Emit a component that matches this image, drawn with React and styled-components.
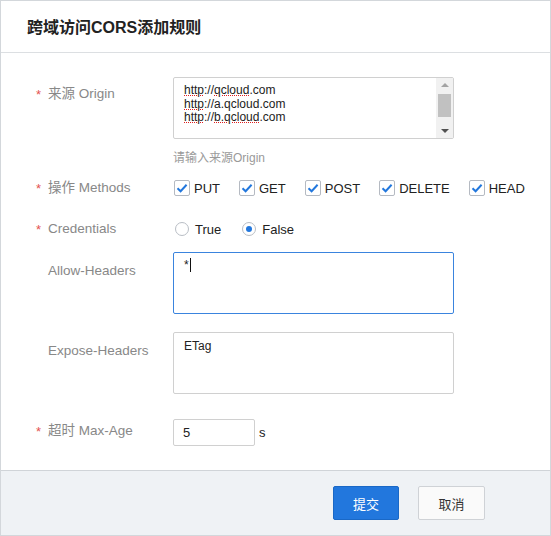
import React from "react";
import styled, { createGlobalStyle } from "styled-components";

const Global = createGlobalStyle`
  html, body { margin: 0; padding: 0; background: #fff; }
  body { font-family: "Liberation Sans", "Noto Sans CJK SC", sans-serif; }
  * { box-sizing: border-box; }
`;

const Dialog = styled.div`
  width: 551px;
  height: 536px;
  border: 1px solid #d3d7db;
  display: flex;
  flex-direction: column;
  background: #fff;
  color: #333;
`;

const Header = styled.div`
  height: 52px;
  flex: none;
  border-bottom: 1px solid #dcdfe2;
  display: flex;
  align-items: center;
  padding: 0 0 0 26px;
`;

const Title = styled.h1`
  margin: 0;
  font-size: 16px;
  font-weight: bold;
  color: #222;
  padding-bottom: 1px;
  font-family: "Liberation Sans", "Noto Sans CJK SC", sans-serif;
`;

const Body = styled.div`
  flex: 1;
  padding: 24px 0 0 0;
`;

const Row = styled.div`
  display: flex;
  align-items: ${(p) => p.$align || "flex-start"};
  margin-bottom: ${(p) => p.$mb || 0}px;
`;

const Label = styled.div`
  width: 172px;
  flex: none;
  padding-left: 47px;
  padding-top: ${(p) => p.$pt || 0}px;
  font-size: 13.5px;
  color: #888;
  position: relative;
  line-height: 16px;
`;

const Star = styled.span`
  position: absolute;
  left: 35px;
  top: ${(p) => (p.$pt || 0) + 1}px;
  color: #e45252;
  font-size: 13px;
`;

const Control = styled.div`
  display: flex;
  flex-direction: column;
`;

const Box = styled.div`
  position: relative;
  width: 281px;
  height: 62px;
  border: 1px solid ${(p) => (p.$focus ? "#3a84de" : "#d0d0d0")};
  border-radius: 2px;
  padding: ${(p) => p.$pt || 6}px 10px 0 10px;
  font-size: 12px;
  line-height: 13.5px;
  color: #222;
  background: #fff;
  overflow: hidden;
`;

const Line = styled.div`
  white-space: nowrap;
`;

const Spell = styled.span`
  text-decoration: underline dotted #e02020;
  text-decoration-thickness: 1px;
  text-underline-offset: 1px;
`;

const ScrollTrack = styled.div`
  position: absolute;
  top: 0;
  right: 0;
  bottom: 0;
  width: 17px;
  background: #f1f1f1;
  display: flex;
  flex-direction: column;
  align-items: center;
  justify-content: space-between;
  padding: 5px 0 5px;
`;

const Arrow = styled.div`
  width: 0;
  height: 0;
  border-left: 4px solid transparent;
  border-right: 4px solid transparent;
  ${(p) =>
    p.$down
      ? "border-top: 4px solid #505050;"
      : "border-bottom: 4px solid #a3a3a3;"}
`;

const Thumb = styled.div`
  position: absolute;
  left: 2px;
  right: 2px;
  top: 16px;
  height: 23px;
  background: #c1c1c1;
`;

const Hint = styled.div`
  margin-top: 11px;
  font-size: 12px;
  color: #9a9a9a;
  line-height: 16px;
`;

const Options = styled.div`
  display: flex;
  align-items: center;
  gap: ${(p) => p.$gap || 20}px;
  padding-left: 1px;
  height: 20px;
`;

const Option = styled.label`
  display: flex;
  align-items: center;
  gap: ${(p) => p.$gap || 4}px;
  font-size: 13px;
  color: #222;
`;

const CheckBox = styled.span`
  width: 16px;
  height: 16px;
  border: 1px solid #b5bac2;
  border-radius: 2px;
  background: #fff;
  display: flex;
  align-items: center;
  justify-content: center;
`;

const Radio = styled.span`
  width: 14px;
  height: 14px;
  border-radius: 50%;
  border: 1px solid #b9bec5;
  background: #fff;
  display: flex;
  align-items: center;
  justify-content: center;
  margin-left: 1px;
  &::after {
    content: "";
    width: 6px;
    height: 6px;
    border-radius: 50%;
    background: ${(p) => (p.$on ? "#2277dd" : "transparent")};
  }
`;

const Caret = styled.span`
  display: inline-block;
  width: 1px;
  height: 14px;
  background: #111;
  vertical-align: -3px;
  margin-left: 1px;
`;

const SmallInput = styled.div`
  width: 82px;
  height: 27px;
  border: 1px solid #d0d0d0;
  border-radius: 2px;
  padding: 0 9px;
  display: flex;
  align-items: center;
  font-size: 13px;
  color: #222;
`;

const Unit = styled.span`
  font-size: 13px;
  color: #222;
  margin-left: 4px;
  padding-top: 6px;
`;

const Footer = styled.div`
  flex: none;
  height: 65px;
  border-top: 1px solid #d0d4d8;
  background: #eff2f5;
  display: flex;
  justify-content: flex-end;
  align-items: flex-start;
  gap: 19px;
  padding: 15px 65px 0 0;
`;

const Button = styled.button`
  width: ${(p) => p.$w}px;
  height: 34px;
  border-radius: 2px;
  font-size: 13px;
  font-family: "Liberation Sans", "Noto Sans CJK SC", sans-serif;
  cursor: pointer;
  border: 1px solid ${(p) => (p.$primary ? "#1a68c6" : "#cfd2d6")};
  background: ${(p) => (p.$primary ? "#2277dd" : "#fafafa")};
  color: ${(p) => (p.$primary ? "#fff" : "#333")};
`;

const Check = () => (
  <svg width="12" height="10" viewBox="0 0 12 10">
    <path d="M1.5 5.2 L4.6 8.2 L10.6 1.8" fill="none" stroke="#2277dd" strokeWidth="2" />
  </svg>
);

const methods = ["PUT", "GET", "POST", "DELETE", "HEAD"];

export default function App() {
  return (
    <>
      <Global />
      <Dialog>
        <Header>
          <Title>跨域访问CORS添加规则</Title>
        </Header>
        <Body>
          <Row $mb={12}>
            <Label $pt={9}>
              <Star $pt={9}>*</Star>来源 Origin
            </Label>
            <Control>
              <Box $pt={6}>
                <Line>
                  <Spell>http</Spell>://<Spell>qcloud</Spell>.com
                </Line>
                <Line>
                  <Spell>http</Spell>://a.qcloud.com
                </Line>
                <Line>
                  <Spell>http</Spell>://<Spell>b.qcloud</Spell>.com
                </Line>
                <ScrollTrack>
                  <Arrow />
                  <Thumb />
                  <Arrow $down />
                </ScrollTrack>
              </Box>
              <Hint>请输入来源Origin</Hint>
            </Control>
          </Row>
          <Row $mb={21} $align="center">
            <Label $pt={0}>
              <Star $pt={0}>*</Star>操作 Methods
            </Label>
            <Options $gap={19}>
              {methods.map((m) => (
                <Option key={m}>
                  <CheckBox>
                    <Check />
                  </CheckBox>
                  {m}
                </Option>
              ))}
            </Options>
          </Row>
          <Row $mb={13} $align="center">
            <Label $pt={0}>
              <Star $pt={0}>*</Star>Credentials
            </Label>
            <Options $gap={20}>
              <Option $gap={6}>
                <Radio />
                True
              </Option>
              <Option $gap={6}>
                <Radio $on />
                False
              </Option>
            </Options>
          </Row>
          <Row $mb={18}>
            <Label $pt={11}>Allow-Headers</Label>
            <Box $focus $pt={5}>
              <Line>
                *<Caret />
              </Line>
            </Box>
          </Row>
          <Row $mb={25}>
            <Label $pt={11}>Expose-Headers</Label>
            <Box $pt={7}>
              <Line>ETag</Line>
            </Box>
          </Row>
          <Row>
            <Label $pt={4}>
              <Star $pt={4}>*</Star>超时 Max-Age
            </Label>
            <SmallInput>5</SmallInput>
            <Unit>s</Unit>
          </Row>
        </Body>
        <Footer>
          <Button $primary $w={66}>提交</Button>
          <Button $w={67}>取消</Button>
        </Footer>
      </Dialog>
    </>
  );
}
